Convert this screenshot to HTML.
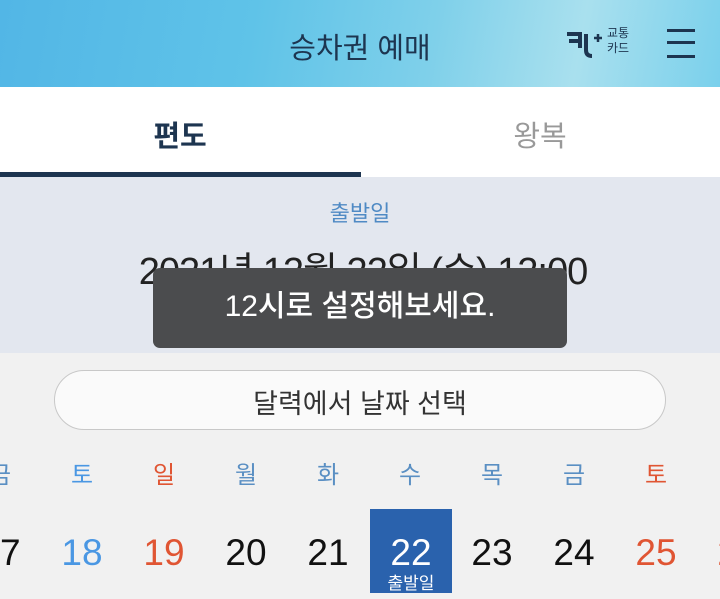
<!DOCTYPE html><html><head><meta charset="utf-8"><style>
body{margin:0;width:720px;height:599px;overflow:hidden;background:#f1f1f1;font-family:"Liberation Sans","Noto Sans CJK KR",sans-serif;position:relative}
.a{position:absolute}
.c{text-align:center}
</style></head><body>
<div class="a" style="left:0;top:0;width:720px;height:87px;background:linear-gradient(100deg,#52b6e6 0%,#5fc3e8 35%,#7fd0ea 60%,#a9e0ee 80%,#7ad0ec 100%)"></div>
<div class="a c" style="left:0;top:25px;width:720px;font-size:29px;color:#1d3550">승차권 예매</div>
<svg class="a" style="left:564px;top:28px" width="42" height="34" viewBox="0 0 42 34"><path d="M3 6H18M5 13H16M16 6V20M22 6V22Q22 28 28 28" stroke="#1d3550" stroke-width="4" fill="none"/><path d="M30 10H38M34 6V14" stroke="#1d3550" stroke-width="2.5"/></svg>
<div class="a" style="left:607px;top:26px;font-size:12px;line-height:15px;color:#1d3550">교통<br>카드</div>
<div class="a" style="left:667px;top:29px;width:28px;height:3px;background:#1d3550;box-shadow:0 12px 0 #1d3550,0 26px 0 #1d3550"></div>
<div class="a" style="left:0;top:87px;width:720px;height:90px;background:#fff"></div>
<div class="a c" style="left:0;top:113px;width:360px;font-size:29px;font-weight:bold;color:#1d3550">편도</div>
<div class="a c" style="left:360px;top:113px;width:360px;font-size:29px;color:#999">왕복</div>
<div class="a" style="left:0;top:172px;width:361px;height:5px;background:#1d3550"></div>
<div class="a" style="left:0;top:177px;width:720px;height:176px;background:#e3e7ef"></div>
<div class="a c" style="left:0;top:196px;width:720px;font-size:22px;color:#4f8ac4">출발일</div>
<div class="a c" style="left:0;top:240px;width:726px;font-size:38px;color:#222;letter-spacing:-1px">2021년 12월 22일 (수) 12:00</div>
<div class="a c" style="left:153px;top:268px;width:414px;height:80px;background:#4b4c4e;border-radius:7px;color:#fff;font-size:30px;font-weight:500;line-height:78px">12시로 설정해보세요.</div>
<div class="a" style="left:54px;top:370px;width:610px;height:58px;border:1px solid #c8c8c8;border-radius:30px;background:#fafafa"></div>
<div class="a c" style="left:54px;top:382px;width:612px;font-size:27px;color:#333">달력에서 날짜 선택</div>
<div class="a" style="left:370px;top:509px;width:82px;height:84px;background:#2a62ad"></div>
<div class="a" style="top:455px;left:0;width:720px;height:40px;font-size:24px;overflow:hidden">
<span class="a c" style="left:-41px;width:82px;color:#5a8fc3">금</span>
<span class="a c" style="left:41px;width:82px;color:#4a97e3">토</span>
<span class="a c" style="left:123px;width:82px;color:#e05533">일</span>
<span class="a c" style="left:205px;width:82px;color:#5a8fc3">월</span>
<span class="a c" style="left:287px;width:82px;color:#5a8fc3">화</span>
<span class="a c" style="left:369px;width:82px;color:#5a8fc3">수</span>
<span class="a c" style="left:451px;width:82px;color:#5a8fc3">목</span>
<span class="a c" style="left:533px;width:82px;color:#5a8fc3">금</span>
<span class="a c" style="left:615px;width:82px;color:#e05533">토</span>
</div>
<div class="a" style="top:532px;left:0;width:720px;height:50px;font-size:37px;overflow:hidden">
<span class="a c" style="left:-41px;width:82px;color:#111">17</span>
<span class="a c" style="left:41px;width:82px;color:#4a97e3">18</span>
<span class="a c" style="left:123px;width:82px;color:#e05533">19</span>
<span class="a c" style="left:205px;width:82px;color:#111">20</span>
<span class="a c" style="left:287px;width:82px;color:#111">21</span>
<span class="a c" style="left:370px;width:82px;color:#fff">22</span>
<span class="a c" style="left:451px;width:82px;color:#111">23</span>
<span class="a c" style="left:533px;width:82px;color:#111">24</span>
<span class="a c" style="left:615px;width:82px;color:#e05533">25</span>
<span class="a c" style="left:697px;width:82px;color:#e05533">26</span>
</div>
<div class="a c" style="left:370px;top:569px;width:82px;font-size:17px;color:#fff">출발일</div>
</body></html>
